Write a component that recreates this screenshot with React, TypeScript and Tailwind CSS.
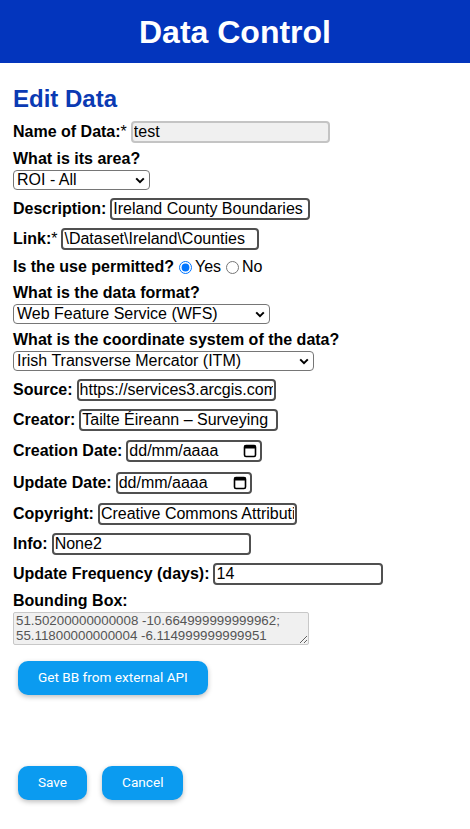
import type { ReactNode } from "react";

const textInput =
  "h-[22px] rounded-[4px] border-2 border-[#505050] bg-white px-[1px] text-[16px] text-black outline-none";

function Row({ label, star, children, tall }: { label: string; star?: boolean; children: ReactNode; tall?: boolean }) {
  return (
    <div className={`flex items-center ${tall ? "h-[32px]" : "h-[30px]"}`}>
      <span className="font-bold">{label}</span>
      {star && <span>*</span>}
      <span className="ml-[4px] flex">{children}</span>
    </div>
  );
}

function Chevron() {
  return (
    <svg width="10" height="7" viewBox="0 0 10 7" className="pointer-events-none absolute right-[5px] top-[7px]">
      <path d="M1.2 1.4 5 5.2 8.8 1.4" fill="none" stroke="#000" strokeWidth="2" />
    </svg>
  );
}

function SelectBlock({ label, value, width }: { label: string; value: string; width: string }) {
  return (
    <div className="pb-[4px] pt-[3px]">
      <div className="font-bold leading-[18px]">{label}</div>
      <div className={`relative mt-[2px] h-[20px] ${width}`}>
        <select
          defaultValue={value}
          className="block h-[20px] w-full appearance-none rounded-[4px] border border-[#767676] bg-white pl-[3px] text-[16px] leading-[18px] text-black outline-none"
        >
          <option>{value}</option>
        </select>
        <Chevron />
      </div>
    </div>
  );
}

function DateBox() {
  return (
    <div className="flex h-[22px] w-[136px] items-center justify-between rounded-[4px] border-2 border-[#505050] bg-white pl-[1px] pr-[3px]">
      <span>dd/mm/aaaa</span>
      <svg width="14" height="14" viewBox="0 0 14 14">
        <rect x="1.5" y="1.5" width="11" height="11" rx="1.5" fill="none" stroke="#000" strokeWidth="1.6" />
        <rect x="1.5" y="1.5" width="11" height="3" fill="#000" />
      </svg>
    </div>
  );
}

function BlueButton({ children }: { children: ReactNode }) {
  return (
    <button className="block h-[34px] rounded-[10px] bg-[#0b9bf0] px-5 font-['Roboto',sans-serif] text-[13.6px] font-normal text-white shadow-[0_2px_5px_rgba(0,0,0,0.25)]">
      {children}
    </button>
  );
}

export default function App() {
  return (
    <div className="min-h-[829px] bg-white font-['Liberation_Sans',Arial,sans-serif] text-[16px] text-black">
      <header className="flex h-[63px] items-center justify-center bg-[#0335bd]">
        <h1 className="text-[32px] font-bold text-white">Data Control</h1>
      </header>

      <div className="px-[13px]">
        <h2 className="mt-[22px] mb-[4px] text-[24px] font-bold leading-[28px] text-[#0b3ab3]">Edit Data</h2>

        <Row label="Name of Data:" star>
          <input
            readOnly
            defaultValue="test"
            className="h-[22px] w-[199px] rounded-[4px] border-2 border-[#c4c4c4] bg-[#f0f0f0] px-[1px] text-[16px] text-black outline-none"
          />
        </Row>

        <SelectBlock label="What is its area?" value="ROI - All" width="w-[137px]" />

        <Row label="Description:">
          <input defaultValue="Ireland County Boundaries" className={`${textInput} w-[200px]`} />
        </Row>
        <Row label="Link:" star>
          <input defaultValue="\Dataset\Ireland\Counties" className={`${textInput} w-[198px]`} />
        </Row>

        <div className="flex h-[26.5px] items-center">
          <span className="font-bold">Is the use permitted?</span>
          <input type="radio" name="perm" defaultChecked className="ml-[5px] mr-[3px] h-[13px] w-[13px] accent-[#0075ff]" />
          <span>Yes</span>
          <input type="radio" name="perm" className="ml-[5px] mr-[3px] h-[13px] w-[13px] accent-[#0075ff]" />
          <span>No</span>
        </div>

        <SelectBlock label="What is the data format?" value="Web Feature Service (WFS)" width="w-[257px]" />
        <SelectBlock label="What is the coordinate system of the data?" value="Irish Transverse Mercator (ITM)" width="w-[301px]" />

        <Row label="Source:">
          <input defaultValue="https://services3.arcgis.com/" className={`${textInput} w-[199px]`} />
        </Row>
        <Row label="Creator:">
          <input defaultValue="Tailte Éireann – Surveying" className={`${textInput} w-[199px]`} />
        </Row>
        <Row label="Creation Date:" tall>
          <DateBox />
        </Row>
        <Row label="Update Date:" tall>
          <DateBox />
        </Row>
        <Row label="Copyright:">
          <input defaultValue="Creative Commons Attribution" className={`${textInput} w-[199px]`} />
        </Row>
        <Row label="Info:">
          <input defaultValue="None2" className={`${textInput} w-[199px]`} />
        </Row>
        <Row label="Update Frequency (days):">
          <input defaultValue="14" className={`${textInput} w-[170px]`} />
        </Row>

        <div className="pt-[3px]">
          <div className="font-bold leading-[18px]">Bounding Box:</div>
          <textarea
            readOnly
            value={"51.50200000000008 -10.664999999999962; 55.11800000000004 -6.114999999999951"}
            className="mt-[2px] block h-[33px] w-[296px] rounded-[2px] border border-[#c8c8c8] bg-[#f0f0f0] px-[2px] text-[13.33px] leading-[15px] text-[#555] outline-none"
          />
        </div>

        <div className="ml-[5px] mt-[16px]">
          <BlueButton>Get BB from external API</BlueButton>
        </div>

        <div className="ml-[5px] mt-[71px] flex gap-[15px]">
          <BlueButton>Save</BlueButton>
          <BlueButton>Cancel</BlueButton>
        </div>
      </div>
    </div>
  );
}
